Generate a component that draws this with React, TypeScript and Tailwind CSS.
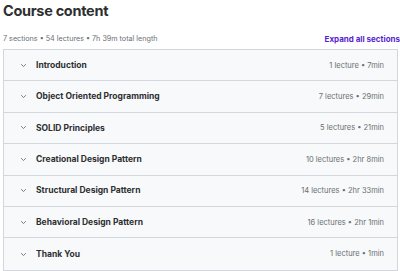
const sections = [
  { title: "Introduction", meta: "1 lecture • 7min" },
  { title: "Object Oriented Programming", meta: "7 lectures • 29min" },
  { title: "SOLID Principles", meta: "5 lectures • 21min" },
  { title: "Creational Design Pattern", meta: "10 lectures • 2hr 8min" },
  { title: "Structural Design Pattern", meta: "14 lectures • 2hr 33min" },
  { title: "Behavioral Design Pattern", meta: "16 lectures • 2hr 1min" },
  { title: "Thank You", meta: "1 lecture • 1min" },
]

function Chevron() {
  return (
    <svg width="7" height="7" viewBox="0 0 10 10" fill="none" className="text-[#6a6f73]">
      <path d="M2 3.5 L5 6.5 L8 3.5" stroke="currentColor" strokeWidth="1.3" strokeLinecap="round" strokeLinejoin="round" />
    </svg>
  )
}

export default function App() {
  return (
    <div className="h-[271px] w-[400px] overflow-hidden bg-white pl-[3px] text-[#2d2f31] [font-family:Inter,'Liberation_Sans',sans-serif]">
      <div className="pt-[1px] text-[14.5px] font-bold leading-[20px] tracking-[-0.3px]">Course content</div>
      <div className="mt-[12px] flex h-[12px] items-center justify-between">
        <span className="text-[7.2px] text-[#6a6f73]">7 sections • 54 lectures • 7h 39m total length</span>
        <span className="text-[8px] font-bold text-[#5624d0]">Expand all sections</span>
      </div>
      <div className="mt-[4px] mr-[2px] border border-[#d1d7dc]">
        {sections.map((s, i) => (
          <div
            key={s.title}
            className={`flex h-[31.4px] items-center bg-[#f7f9fa] pl-[16px] pr-[13px] ${
              i < sections.length - 1 ? "border-b border-[#d1d7dc]" : ""
            }`}
          >
            <Chevron />
            <span className="ml-[9px] text-[8.5px] font-bold">{s.title}</span>
            <span className="ml-auto text-[7.5px] text-[#6a6f73]">{s.meta}</span>
          </div>
        ))}
      </div>
    </div>
  )
}
